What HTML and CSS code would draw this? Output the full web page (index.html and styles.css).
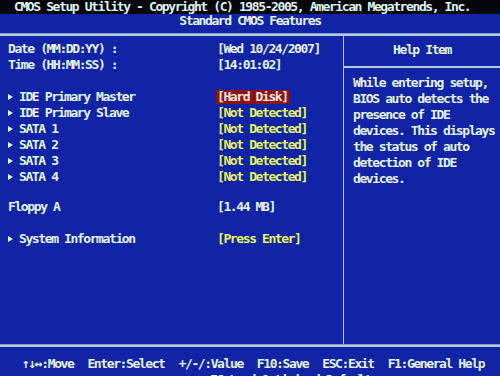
FILE: index.html
```html
<!DOCTYPE html>
<html>
<head>
<meta charset="utf-8">
<link rel="stylesheet" href="styles.css">
</head>
<body>
<div class="screen">
  <div class="topbar">CMOS Setup Utility - Copyright (C) 1985-2005, American Megatrends, Inc.</div>
  <div class="subtitle">Standard CMOS Features</div>
  <div class="rule"></div>
  <div class="main">
    <div class="left">
      <div class="row"><span class="label">Date (MM:DD:YY) :</span><span class="val white">[Wed 10/24/2007]</span></div>
      <div class="row"><span class="label">Time (HH:MM:SS) :</span><span class="val white">[14:01:02]</span></div>
      <div class="group">
        <div class="row"><span class="label"><i class="arrow"></i>IDE Primary Master</span><span class="val"><span class="sel">[Hard Disk]</span></span></div>
        <div class="row"><span class="label"><i class="arrow"></i>IDE Primary Slave</span><span class="val yellow">[Not Detected]</span></div>
        <div class="row"><span class="label"><i class="arrow"></i>SATA 1</span><span class="val yellow">[Not Detected]</span></div>
        <div class="row"><span class="label"><i class="arrow"></i>SATA 2</span><span class="val yellow">[Not Detected]</span></div>
        <div class="row"><span class="label"><i class="arrow"></i>SATA 3</span><span class="val yellow">[Not Detected]</span></div>
        <div class="row"><span class="label"><i class="arrow"></i>SATA 4</span><span class="val yellow">[Not Detected]</span></div>
      </div>
      <div class="group floppy">
        <div class="row"><span class="label">Floppy A</span><span class="val white">[1.44 MB]</span></div>
      </div>
      <div class="group sysinfo">
        <div class="row"><span class="label"><i class="arrow"></i>System Information</span><span class="val yellow">[Press Enter]</span></div>
      </div>
    </div>
    <div class="right">
      <div class="help-head">Help Item</div>
      <div class="help-text">
        <div>While entering setup,</div>
        <div>BIOS auto detects the</div>
        <div>presence of IDE</div>
        <div>devices. This displays</div>
        <div>the status of auto</div>
        <div>detection of IDE</div>
        <div>devices.</div>
      </div>
    </div>
  </div>
  <div class="rule"></div>
  <div class="footer">
    <div class="keys">
      <span>↑↓↔:Move</span>
      <span>Enter:Select</span>
      <span>+/-/:Value</span>
      <span>F10:Save</span>
      <span>ESC:Exit</span>
      <span>F1:General Help</span>
    </div>
    <div class="keys2">F6:Load Optimized Defaults</div>
  </div>
</div>
</body>
</html>
```
FILE: styles.css
```css
html, body {
  margin: 0;
  padding: 0;
  background: #1124a6;
}
.screen {
  width: 500px;
  height: 376px;
  overflow: hidden;
  background: #1124a6;
  color: #e4f2ea;
  font-family: "DejaVu Sans Mono", "Liberation Mono", monospace;
  font-weight: bold;
  font-size: 13px;
  letter-spacing: -1.4px;
  white-space: nowrap;
}
.topbar {
  height: 14px;
  line-height: 14px;
  background: #05060c;
  color: #dff2ee;
  padding-left: 14px;
}
.subtitle {
  height: 19px;
  line-height: 14px;
  text-align: center;
}
.rule {
  height: 2px;
  background: #b4cad8;
  border-top: 1px solid #7f98c8;
}
.main {
  display: grid;
  grid-template-columns: 343px 1px 1fr;
  grid-template-areas: "l s r";
  height: 308px;
}
.main::before {
  content: "";
  grid-area: s;
  background: #b4cad8;
}
.left {
  grid-area: l;
  padding-top: 5px;
}
.row {
  display: flex;
  height: 16px;
  line-height: 16px;
}
.label {
  width: 209px;
  padding-left: 8px;
  display: flex;
  align-items: center;
}
.val.white { color: #e4f2ea; }
.val.yellow { color: #e8f25e; }
.sel {
  display: inline-block;
  background: #8e1212;
  color: #f2e8e4;
  line-height: 14px;
  margin: 1px 0 0 -1px;
  padding: 0 1px;
}
.arrow {
  display: inline-block;
  width: 0;
  height: 0;
  border-left: 5px solid #e4f2ea;
  border-top: 3.5px solid transparent;
  border-bottom: 3.5px solid transparent;
  margin-right: 6px;
}
.group { margin-top: 16px; }
.floppy { margin-top: 14px; }
.sysinfo { margin-top: 16px; }
.right {
  grid-area: r;
  display: flex;
  flex-direction: column;
}
.help-head {
  height: 30px;
  line-height: 28px;
  text-align: center;
  border-bottom: 2px solid #b4cad8;
}
.help-text {
  padding: 7px 0 0 9px;
  line-height: 16px;
}
.footer {
  padding-top: 9px;
  line-height: 16px;
}
.keys {
  display: flex;
  gap: 14px;
  padding-left: 22px;
}
.keys2 {
  padding-left: 210px;
}
```
